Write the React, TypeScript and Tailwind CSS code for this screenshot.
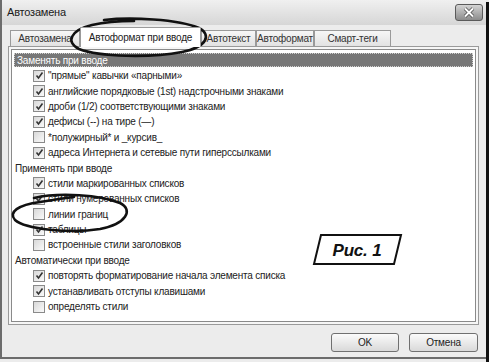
import React from 'react';

type Row = { kind: 'group'; text: string } | { kind: 'check'; text: string; checked: boolean };

const rows: Row[] = [
  { kind: 'check', text: '"прямые" кавычки «парными»', checked: true },
  { kind: 'check', text: 'английские порядковые (1st) надстрочными знаками', checked: true },
  { kind: 'check', text: 'дроби (1/2) соответствующими знаками', checked: true },
  { kind: 'check', text: 'дефисы (--) на тире (—)', checked: true },
  { kind: 'check', text: '*полужирный* и _курсив_', checked: false },
  { kind: 'check', text: 'адреса Интернета и сетевые пути гиперссылками', checked: true },
  { kind: 'group', text: 'Применять при вводе' },
  { kind: 'check', text: 'стили маркированных списков', checked: true },
  { kind: 'check', text: 'стили нумерованных списков', checked: true },
  { kind: 'check', text: 'линии границ', checked: false },
  { kind: 'check', text: 'таблицы', checked: true },
  { kind: 'check', text: 'встроенные стили заголовков', checked: false },
  { kind: 'group', text: 'Автоматически при вводе' },
  { kind: 'check', text: 'повторять форматирование начала элемента списка', checked: true },
  { kind: 'check', text: 'устанавливать отступы клавишами', checked: true },
  { kind: 'check', text: 'определять стили', checked: false },
];

const tabs = [
  { label: 'Автозамена', w: 'w-[70px]' },
  { label: 'Автоформат при вводе', w: 'w-[121px]', active: true },
  { label: 'Автотекст', w: 'w-[55px]' },
  { label: 'Автоформат', w: 'w-[58px]' },
  { label: 'Смарт-теги', w: 'w-[77px]' },
];

function CheckBox({ checked }: { checked: boolean }) {
  return (
    <div className="w-[12px] h-[12px] border border-[#8a8a8a] bg-gradient-to-br from-[#d8d8d8] to-[#fafafa] flex items-center justify-center shrink-0">
      {checked && (
        <svg width="9" height="9" viewBox="0 0 9 9">
          <path d="M1.5 4.5 L3.5 7 L7.5 1.5" fill="none" stroke="#333" strokeWidth="1.6" />
        </svg>
      )}
    </div>
  );
}

export default function App() {
  return (
    <div
      className="relative w-[489px] h-[362px] overflow-hidden bg-[#ececec] text-[10px] tracking-[-0.2px] text-[#222]"
      style={{ fontFamily: '"Liberation Sans", Arial, sans-serif' }}
    >
      <div className="w-[486px] h-[359px] border-l-2 border-b-2 border-[#6c6c6c] flex flex-col">
        {/* Title bar */}
        <div className="h-[25px] bg-gradient-to-b from-[#f0f0f0] to-[#d6d6d6] flex items-center justify-between pl-[5px] pr-[3px]">
          <span className="text-[11px] text-[#1a1a1a]">Автозамена</span>
          <div className="w-[28px] h-[17px] rounded-[3px] border border-[#5a5a5a] bg-gradient-to-b from-[#d4d4d4] to-[#8c8c8c] flex items-center justify-center">
            <svg width="12" height="11" viewBox="0 0 12 11">
              <path d="M2 1.5 L10 9.5 M10 1.5 L2 9.5" stroke="#444" strokeWidth="3.4" />
              <path d="M2 1.5 L10 9.5 M10 1.5 L2 9.5" stroke="#fff" strokeWidth="2" />
            </svg>
          </div>
        </div>

        {/* Tabs */}
        <div className="flex items-end pl-[8px] mt-[2px] h-[19px]">
          {tabs.map((t) =>
            t.active ? (
              <div
                key={t.label}
                className={`${t.w} h-[20px] -mb-px z-10 bg-white border border-b-0 border-[#9a9a9a] flex items-center justify-center`}
              >
                {t.label}
              </div>
            ) : (
              <div
                key={t.label}
                className={`${t.w} h-[16px] bg-gradient-to-b from-[#f7f7f7] to-[#e2e2e2] border border-b-0 border-[#9a9a9a] flex items-center justify-center text-[#333]`}
              >
                {t.label}
              </div>
            )
          )}
        </div>

        {/* Panel */}
        <div className="ml-[6px] w-[471px] h-[279px] border border-[#9a9a9a] bg-[#f6f6f6] p-[2px]">
          <div className="h-full border border-[#8a8a8a] bg-white pt-[3px] px-[2px]">
            <div className="h-[14px] bg-[#777] border border-dotted border-[#d0d0d0] text-white pl-[2px] flex items-center">
              Заменять при вводе
            </div>
            <div className="pt-[1px]">
              {rows.map((r, i) =>
                r.kind === 'group' ? (
                  <div key={i} className="h-[15.4px] flex items-center pl-[1px]">
                    {r.text}
                  </div>
                ) : (
                  <div key={i} className="h-[15.4px] flex items-center gap-[3px] pl-[19px]">
                    <CheckBox checked={r.checked} />
                    <span>{r.text}</span>
                  </div>
                )
              )}
            </div>
          </div>
        </div>

        {/* Buttons */}
        <div className="flex justify-end gap-[10px] pr-[8px] mt-[8px]">
          <button className="w-[68px] h-[19px] rounded-[3px] border border-[#707070] bg-gradient-to-b from-[#fbfbfb] to-[#d9d9d9] text-[10px] text-[#222]">
            OK
          </button>
          <button className="w-[69px] h-[19px] rounded-[3px] border border-[#707070] bg-gradient-to-b from-[#fbfbfb] to-[#d9d9d9] text-[10px] text-[#222]">
            Отмена
          </button>
        </div>
      </div>
      {/* right shadow edge */}
      <div className="absolute right-0 top-[2px] w-[3px] h-[360px] bg-[#111]" />

      {/* Hand-drawn annotations */}
      <svg className="absolute left-0 top-0 pointer-events-none" width="489" height="362" viewBox="0 0 489 362">
        <path
          d="M104 20 C 130 17, 178 19, 199 28 C 212 35, 207 47, 182 52 C 150 58, 100 57, 79 49 C 65 42, 71 30, 92 25 C 105 22, 120 21, 134 21"
          fill="none"
          stroke="#111"
          strokeWidth="2.6"
          strokeLinecap="round"
        />
        <path
          d="M34 198 C 60 192, 100 195, 120 203 C 134 210, 126 224, 100 229 C 70 234, 25 229, 15 220 C 8 212, 18 205, 40 202 C 52 200, 64 198, 74 197"
          fill="none"
          stroke="#111"
          strokeWidth="2.6"
          strokeLinecap="round"
        />
        <polygon points="321,235 401,235 394,264 314,264" fill="#fff" stroke="#111" strokeWidth="2" />
        <text
          x="357"
          y="256"
          textAnchor="middle"
          fontFamily='"Liberation Sans", Arial, sans-serif'
          fontSize="17"
          fontWeight="bold"
          fontStyle="italic"
          fill="#111"
        >
          Рис. 1
        </text>
      </svg>
    </div>
  );
}
